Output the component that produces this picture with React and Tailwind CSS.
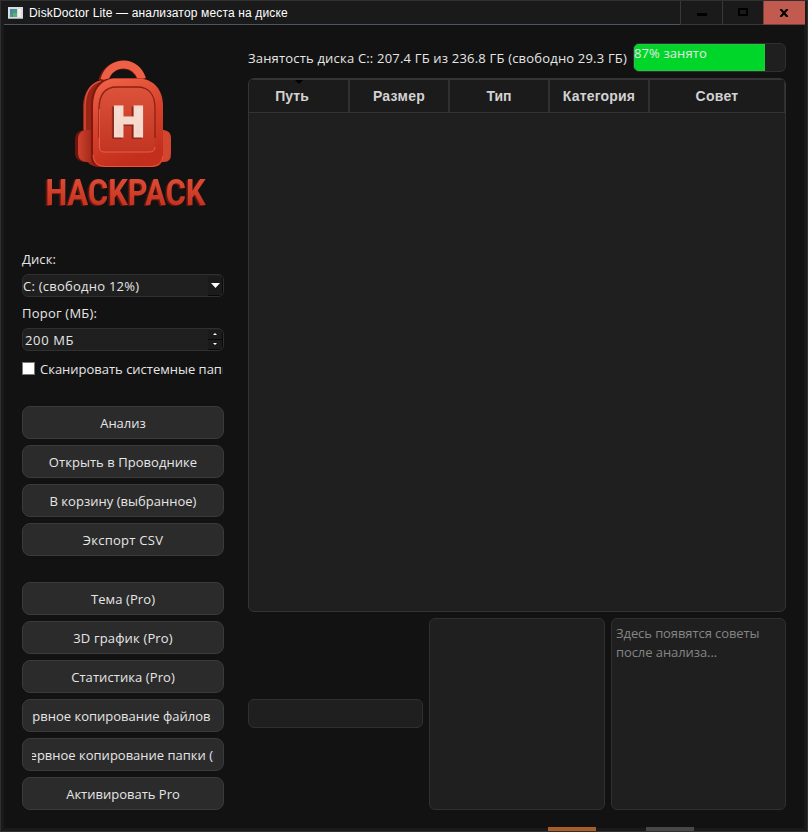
import React from "react";

const ui = "font-['Open_Sans','Noto_Sans',sans-serif]";
const arial = "font-['Liberation_Sans',Arial,sans-serif]";

function Logo() {
  return (
    <svg width="202" height="202" viewBox="22 33 202 202" className="block shrink-0">
      <defs>
        <linearGradient id="front" x1="0" y1="0" x2="0.3" y2="1">
          <stop offset="0" stopColor="#f0664a" />
          <stop offset="0.5" stopColor="#d9432d" />
          <stop offset="1" stopColor="#c42f1d" />
        </linearGradient>
        <linearGradient id="panel" x1="0" y1="0" x2="0" y2="1">
          <stop offset="0" stopColor="#dc523a" />
          <stop offset="1" stopColor="#c13522" />
        </linearGradient>
        <linearGradient id="side" x1="0" y1="0" x2="1" y2="0">
          <stop offset="0" stopColor="#ce432e" />
          <stop offset="1" stopColor="#a12618" />
        </linearGradient>
        <linearGradient id="word" x1="0" y1="0" x2="0" y2="1">
          <stop offset="0" stopColor="#e2523a" />
          <stop offset="1" stopColor="#bd2c1a" />
        </linearGradient>
        <linearGradient id="cream" x1="0" y1="0" x2="0" y2="1">
          <stop offset="0" stopColor="#f8e6dc" />
          <stop offset="1" stopColor="#f2cfc0" />
        </linearGradient>
        <filter id="depth" x="-10%" y="-10%" width="120%" height="120%" colorInterpolationFilters="sRGB">
          <feDropShadow dx="-1.500" dy="1" stdDeviation="0.300" floodColor="#74160d" />
        </filter>
      </defs>
      <path d="M102.500 81C105 71 114 65 123 65C132 65 139 71 142 80" fill="none" stroke="#7a180f" strokeWidth="8.500" />
      <path d="M104.500 80C107 70 115 64.500 124 64.500C132 64.500 139 70 142 79" fill="none" stroke="#ee6046" strokeWidth="8" />
      <path d="M104 80C90 82 83 93 83 107V148C83 161 90 167 100 167Z" fill="#9a2517" />
      <path d="M101 81C89 84 85 94 85 107V130" fill="none" stroke="#dc4e38" strokeWidth="1.500" />
      <path d="M90 130H84Q75 131 75 139V154Q76 162 86 162H93V130Z" fill="#6e140c" />
      <path d="M92 130H85Q78 132 78 139V154Q79 162 87 162H93V130Z" fill="url(#side)" />
      <path d="M162 130H164Q171 131 171 138V154Q171 162 164 162H160Z" fill="#d2452f" />
      <path d="M91 106C91 88 99 78 114 78H137C153 79 161 90 161 106V156Q161 167 150 167H102Q91 167 91 156Z" fill="#7e190f" />
      <path d="M93 106C93 89 102 78.500 116 78.500H139C154 79 163 90 163 106V156Q163 167 152 167H104Q93 167 93 156Z" fill="url(#front)" />
      <path d="M99 109C99 94 106 87 117 87H137C149 87 155 95 155 108V147Q155 152 149 152H104Q99 152 99 147Z" fill="url(#panel)" />
      <path d="M99 138V109C99 94 106 87 117 87H137C149 87 155 95 155 108V138" fill="none" stroke="#8e2013" strokeWidth="1.300" />
      <path d="M99.500 109V147Q99.500 152 104 152H149Q155 152 155 147" fill="none" stroke="#ed684e" strokeWidth="0.800" />
      <path d="M93 155Q94 166 105 166.500H151Q162 166 163 156" fill="none" stroke="#ed5539" strokeWidth="1" />
      <text x="112.500" y="136" textLength="32" lengthAdjust="spacingAndGlyphs" fontSize="43" fill="url(#cream)" stroke="#f5dacd" strokeWidth="3" filter="url(#depth)" className={`${arial} font-bold`}>H</text>
      <text x="45.500" y="204.500" textLength="160" lengthAdjust="spacingAndGlyphs" fontSize="36" fill="url(#word)" filter="url(#depth)" className="font-['Roboto',sans-serif] font-bold">HACKPACK</text>
    </svg>
  );
}

function Button({ children, inner = "" }) {
  return (
    <button className="flex h-[33px] w-full shrink-0 items-center justify-center rounded-lg border border-[#3a3a3a] bg-[#2b2b2b] px-[9px] pt-[2px] text-[#e6e6e6]">
      <span className="flex w-full justify-center overflow-hidden whitespace-nowrap">
        <span className={inner}>{children}</span>
      </span>
    </button>
  );
}

function TitleBar() {
  return (
    <header className="-mr-[2px] flex h-6 shrink-0 bg-[#1a1a1a]">
      <div className="flex flex-1 items-center border-b border-[#4c5661] pl-1">
        <svg width="15" height="12" viewBox="0 0 15 12" shapeRendering="crispEdges">
          <rect width="15" height="12" fill="#d9dde0" />
          <rect x="2" y="2" width="7" height="8" fill="#4b9488" />
          <rect x="2" y="2" width="3" height="4" fill="#4b86a7" />
          <rect x="5" y="6" width="4" height="4" fill="#63ab77" />
          <rect x="10" y="2" width="3" height="8" fill="#efefef" />
          <path d="M0 11.500H15" stroke="#a5a5a9" />
        </svg>
        <span className={`${arial} ml-[6px] text-[12px] leading-4 tracking-[0.15px] whitespace-nowrap text-white`}>DiskDoctor Lite — анализатор места на диске</span>
      </div>
      <div className="flex w-[42px] justify-center border-b border-l border-[#383838] pt-3"><i className="h-[3px] w-[10px] bg-black" /></div>
      <div className="flex w-[41px] justify-center border-b border-l border-[#383838] pt-[7px]"><i className="h-2 w-[10px] border-2 border-black" /></div>
      <div className="flex w-[42px] items-center justify-center border-b border-l border-[#793f39] bg-[#c25a50] pr-[2px]">
        <svg width="10" height="8" viewBox="0 0 10 8"><path d="M1.500 0L8.500 8M8.500 0L1.500 8" stroke="black" strokeWidth="2.200" /></svg>
      </div>
      <div className="w-px" />
    </header>
  );
}

function Sidebar() {
  return (
    <aside className="flex w-[202px] shrink-0 flex-col pt-2">
      <Logo />
      <label className="mt-[15px] h-[18px] leading-[18px] tracking-[0.1px]">Диск:</label>
      <div className="mt-[6px] flex h-[23px] shrink-0 items-center overflow-hidden rounded-md border border-[#303030] bg-[#1f1f1f]">
        <span className="flex-1 pt-[2px] tracking-[0.24px]">C: (свободно 12%)</span>
        <div className="flex h-[20px] w-[15px] items-center justify-center border-r border-b border-[#090909] bg-[#1b1b1b]">
          <svg width="9" height="5"><path d="M0 0H9L4.500 5Z" fill="white" /></svg>
        </div>
      </div>
      <label className="mt-[7px] h-[18px] leading-[18px] tracking-[0.22px]">Порог (МБ):</label>
      <div className="mt-[6px] flex h-[23px] shrink-0 items-center overflow-hidden rounded-md border border-[#303030] bg-[#1f1f1f] pl-[2px]">
        <span className="flex-1 pt-[2px] tracking-[0.65px]">200 МБ</span>
        <div className="flex w-[15px] flex-col">
          <div className="flex h-[10px] items-center justify-center border-r border-b border-[#090909] bg-[#1b1b1b]"><svg width="4" height="2"><path d="M0 2L2 0L4 2Z" fill="white" /></svg></div>
          <div className="flex h-[10px] items-center justify-center border-r border-b border-[#090909] bg-[#1b1b1b]"><svg width="4" height="2"><path d="M0 0H4L2 2Z" fill="white" /></svg></div>
        </div>
      </div>
      <label className="mt-[9px] flex h-[19px] shrink-0 items-center overflow-hidden whitespace-nowrap">
        <i className="mt-[-2px] mr-[5px] size-[13px] shrink-0 border border-[#777] bg-white" />
        <span className="mr-px overflow-hidden tracking-[-0.01px]">Сканировать системные папки</span>
      </label>
      <div className="mt-[27px] flex flex-col gap-[6px]">
        <Button>Анализ</Button>
        <Button inner="tracking-[0.05px]">Открыть в Проводнике</Button>
        <Button inner="tracking-[0.02px]">В корзину (выбранное)</Button>
        <Button inner="tracking-[0.25px]">Экспорт CSV</Button>
      </div>
      <div className="mt-[26px] flex flex-col gap-[6px]">
        <Button inner="tracking-[0.1px]">Тема (Pro)</Button>
        <Button inner="tracking-[0.15px]">3D график (Pro)</Button>
        <Button inner="tracking-[0.08px]">Статистика (Pro)</Button>
        <Button>Резервное копирование файлов (Pro)</Button>
        <Button>Резервное копирование папки (Pro)</Button>
        <Button>Активировать Pro</Button>
      </div>
    </aside>
  );
}

function Content() {
  return (
    <main className="ml-6 flex w-[538px] flex-col pt-[18px]">
      <div className="flex h-[29px] shrink-0 justify-between">
        <span className="leading-[31px] tracking-[0.19px] whitespace-nowrap">Занятость диска C:: 207.4 ГБ из 236.8 ГБ (свободно 29.3 ГБ)</span>
        <div className="w-[153px] shrink-0 overflow-hidden rounded-md border border-[#303030] bg-[#1f1f1f]">
          <div className="h-full w-[131px] border border-[#26c641] bg-[#00d62a] leading-[17px] whitespace-nowrap"><span className="-ml-px tracking-[0.1px]">87% занято</span></div>
        </div>
      </div>
      <section className="mt-[6px] h-[534px] shrink-0 overflow-hidden rounded-md border border-[#343434] bg-[#1f1f1f]">
        <div className={`${arial} grid h-[34px] grid-cols-[101px_100px_100px_100px_1fr] border-t border-b border-[#343434] bg-[#1b1b1b] text-[14px] font-bold text-[#d2d2d2]`}>
          <div className="relative flex items-center justify-center border-r-2 border-[#303030] pr-[13px]">
            Путь
            <svg className="absolute top-0 left-[46px]" width="8" height="4"><path d="M0 0H8L4 4Z" fill="black" /></svg>
          </div>
          <div className="flex items-center justify-center border-r-2 border-[#303030] tracking-[0.3px]">Размер</div>
          <div className="flex items-center justify-center border-r-2 border-[#303030]">Тип</div>
          <div className="flex items-center justify-center border-r-2 border-[#303030] tracking-[0.2px]">Категория</div>
          <div className="flex items-center justify-center border-r border-[#303030] tracking-[0.3px]">Совет</div>
        </div>
      </section>
      <div className="mt-[6px] flex h-[192px] shrink-0 items-center gap-[6px]">
        <div className="mt-[-1px] h-[29px] w-[175px] rounded-md border border-[#303030] bg-[#1f1f1f]" />
        <div className="h-full w-[176px] rounded-md border border-[#303030] bg-[#1f1f1f]" />
        <div className="h-full w-[175px] rounded-md border border-[#303030] bg-[#1f1f1f] px-1 pt-[5px] leading-[19px] tracking-[-0.08px] text-[#858585]">Здесь появятся советы<br />после анализа...</div>
      </div>
    </main>
  );
}

export default function App() {
  return (
    <div className={`${ui} relative flex h-[832px] w-[808px] flex-col overflow-hidden border border-[#303030] bg-[#1a1a1a] px-[3px] pb-[3px] text-[13px] text-[#e6e6e6]`}>
      <TitleBar />
      <div className="flex min-h-0 flex-1 bg-[#121212] pl-[18px]">
        <Sidebar />
        <Content />
      </div>
      <i className="absolute bottom-[-1px] left-[547px] h-[5px] w-12 bg-[#a75d25]" />
      <i className="absolute bottom-[-1px] left-[645px] h-[5px] w-12 bg-[#484848]" />
    </div>
  );
}
